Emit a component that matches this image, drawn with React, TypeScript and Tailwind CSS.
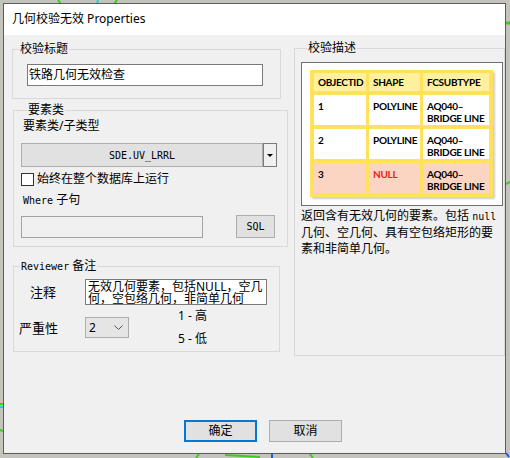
import type { ReactNode } from "react";

// Gruppenrahmen wie in Windows-Dialogen
function Group({ label, className, children }: { label: ReactNode; className: string; children: ReactNode }) {
  return (
    <fieldset className={`border border-[#d9d9d9] ${className}`}>
      <legend className="ml-[6px] px-[1px] leading-[16px]">{label}</legend>
      {children}
    </fieldset>
  );
}

const mono = "font-['DejaVu_Sans_Mono','Liberation_Mono',monospace] text-[10px]";

// Hintergrund hinter dem Fenster (Kartenausschnitt)
function MapBits() {
  return (
    <svg className="absolute inset-0" width="510" height="458">
      <line x1="58" y1="0" x2="61" y2="4" stroke="#3ccc1c" strokeWidth="2" />
      <line x1="98" y1="0" x2="97" y2="4" stroke="#22d0d8" strokeWidth="2" />
      <line x1="117" y1="0" x2="114" y2="4" stroke="#3ccc1c" strokeWidth="2" />
      <line x1="506" y1="23" x2="510" y2="23" stroke="#3ccc1c" strokeWidth="3" />
      <line x1="506" y1="184" x2="510" y2="182" stroke="#3ccc1c" strokeWidth="2" />
      <line x1="0" y1="404" x2="3" y2="404" stroke="#3ccc1c" strokeWidth="2" />
      <line x1="0" y1="407" x2="3" y2="407" stroke="#22d0d8" strokeWidth="2" />
      <line x1="0" y1="430" x2="3" y2="431" stroke="#3ccc1c" strokeWidth="2" />
      <line x1="196" y1="458" x2="199" y2="454" stroke="#3ccc1c" strokeWidth="2" />
      <line x1="225" y1="455" x2="260" y2="457" stroke="#3ccc1c" strokeWidth="2" />
      <line x1="272" y1="454" x2="272" y2="458" stroke="#1060e0" strokeWidth="2" />
      <line x1="310" y1="454" x2="313" y2="458" stroke="#3ccc1c" strokeWidth="2" />
      <line x1="506" y1="453" x2="509" y2="457" stroke="#1060e0" strokeWidth="2" />
    </svg>
  );
}

const rows = [
  { id: "1", shape: "POLYLINE", bg: "bg-white", red: false },
  { id: "2", shape: "POLYLINE", bg: "bg-white", red: false },
  { id: "3", shape: "NULL", bg: "bg-[#fcd4c2]", red: true },
];

export default function App() {
  return (
    <div className="relative h-[458px] w-[510px] overflow-hidden bg-[#c5c4bc] pl-[3px] pt-[3px] font-['Noto_Sans','Noto_Sans_CJK_SC',sans-serif] text-[12px] text-black">
      <MapBits />
      <div className="relative flex h-[451px] w-[503px] flex-col border border-[#5c5c5c] bg-[#f0f0f0]">
        {/* Titelleiste */}
        <div className="flex h-[31px] shrink-0 items-center bg-white pb-[2px] pl-[8px] leading-[16px]">
          几何校验无效 Properties
        </div>

        <div className="flex flex-1 flex-col">
          <div className="flex">
            {/* linke Spalte */}
            <div className="ml-[8px] flex w-[276px] flex-col">
              <Group label="校验标题" className="mt-[6px] h-[58px] w-[269px]">
                <div className="ml-[14px] mt-[7px] flex h-[22px] w-[236px] items-center border border-[#7a7a7a] bg-white pl-[1px] leading-[16px]">
                  铁路几何无效检查
                </div>
              </Group>

              <Group label="要素类" className="ml-[1px] mt-[3px] h-[145px] w-[275px] px-[7px]">
                <div className="ml-[2px] leading-[16px]">要素类/子类型</div>
                <div className="mt-[9px] flex h-[24px]">
                  <div className={`flex w-[242px] items-center justify-center border border-[#adadad] bg-[#e1e1e1] ${mono}`}>
                    SDE.UV_LRRL
                  </div>
                  <div className="flex w-[14px] items-center justify-center border border-[#7a7a7a] bg-[#f0f0f0]">
                    <div className="h-0 w-0 border-x-[3px] border-t-[3px] border-x-transparent border-t-black" />
                  </div>
                </div>
                <div className="mt-[4px] flex h-[16px] items-center">
                  <div className="h-[13px] w-[13px] border border-[#333333] bg-white" />
                  <span className="ml-[3px] leading-[16px]">始终在整个数据库上运行</span>
                </div>
                <div className="ml-[2px] mt-[5px] leading-[16px]">
                  <span className={mono}>Where</span> 子句
                </div>
                <div className="mt-[6px] flex items-end">
                  <div className="h-[22px] w-[182px] border border-[#a3a3a3] bg-[#f0f0f0]" />
                  <div className={`ml-[33px] flex h-[23px] w-[39px] items-center justify-center border border-[#adadad] bg-[#e1e1e1] ${mono}`}>
                    SQL
                  </div>
                </div>
              </Group>

              <Group
                label={
                  <>
                    <span className={mono}>Reviewer</span> 备注
                  </>
                }
                className="ml-[1px] mt-[11px] h-[94px] w-[267px]"
              >
                <div className="mt-[4px] flex items-center">
                  <div className="w-[71px] pl-[16px] text-[13px] leading-[16px]">注释</div>
                  <div className="h-[26px] w-[182px] overflow-hidden border border-[#7a7a7a] bg-white pl-[2px] pt-[1px] text-[12px] leading-[12px]">
                    无效几何要素，包括NULL，空几
                    <br />
                    何，空包络几何，非简单几何
                  </div>
                </div>
                <div className="mt-[3px] flex items-center">
                  <div className="w-[71px] pl-[5px] text-[13px] leading-[16px]">严重性</div>
                  <div className="flex h-[21px] w-[44px] items-center justify-between border border-[#adadad] bg-[#e5e5e5] pl-[3px] pr-[5px] leading-[16px]">
                    <span>2</span>
                    <svg width="9" height="6" viewBox="0 0 9 6">
                      <path d="M0.5 0.5 L4.5 4.5 L8.5 0.5" fill="none" stroke="#555" strokeWidth="1" />
                    </svg>
                  </div>
                  <div className="ml-[49px] flex flex-col gap-[7px] leading-[16px]">
                    <span>1 - 高</span>
                    <span>5 - 低</span>
                  </div>
                </div>
              </Group>
            </div>

            {/* rechte Spalte */}
            <div className="ml-[6px] w-[211px]">
              <Group label="校验描述" className="mt-[5px] h-[316px] w-[211px] pl-[6px]">
                <div className="mt-[6px] h-[144px] w-[202px] border border-[#707070] bg-white pl-[8px] pt-[7px]">
                  <div className="grid w-[183px] grid-cols-[52px_51px_66px] grid-rows-[18px_30px_30px_30px] gap-x-[3px] gap-y-[4px] bg-[#ffe15c] px-[4px] pb-[4px] pt-[3px] font-['Lato',sans-serif] text-[10px] font-bold tracking-[-0.3px] shadow-[2px_2px_2px_rgba(0,0,0,0.2)]">
                    {["OBJECTID", "SHAPE", "FCSUBTYPE"].map((h) => (
                      <div key={h} className="flex items-center bg-[#fff0a0] pl-[4px]">
                        {h}
                      </div>
                    ))}
                    {rows.map((r) => [
                      <div key={r.id + "a"} className={`${r.bg} pl-[4px] pt-[5px] leading-[12px]`}>
                        {r.id}
                      </div>,
                      <div key={r.id + "b"} className={`${r.bg} pl-[4px] pt-[5px] leading-[12px] ${r.red ? "text-[#e8201c]" : ""}`}>
                        {r.shape}
                      </div>,
                      <div key={r.id + "c"} className={`${r.bg} pl-[4px] pt-[5px] leading-[12px]`}>
                        AQ040–
                        <br />
                        BRIDGE LINE
                      </div>,
                    ])}
                  </div>
                </div>
                <p className="mt-[2px] leading-[16px]">
                  返回含有无效几何的要素。包括 <span className={mono}>null</span>
                  <br />
                  几何、空几何、具有空包络矩形的要
                  <br />
                  素和非简单几何。
                </p>
              </Group>
            </div>
          </div>

          {/* Schaltflächen */}
          <div className="mb-[11px] ml-[180px] mt-auto flex gap-[12px]">
            <button className="flex h-[22px] w-[73px] items-center justify-center border-2 border-[#0078d7] bg-[#e1e1e1] leading-[16px]">
              确定
            </button>
            <button className="flex h-[22px] w-[73px] items-center justify-center border border-[#adadad] bg-[#e1e1e1] leading-[16px]">
              取消
            </button>
          </div>
        </div>
      </div>
    </div>
  );
}
